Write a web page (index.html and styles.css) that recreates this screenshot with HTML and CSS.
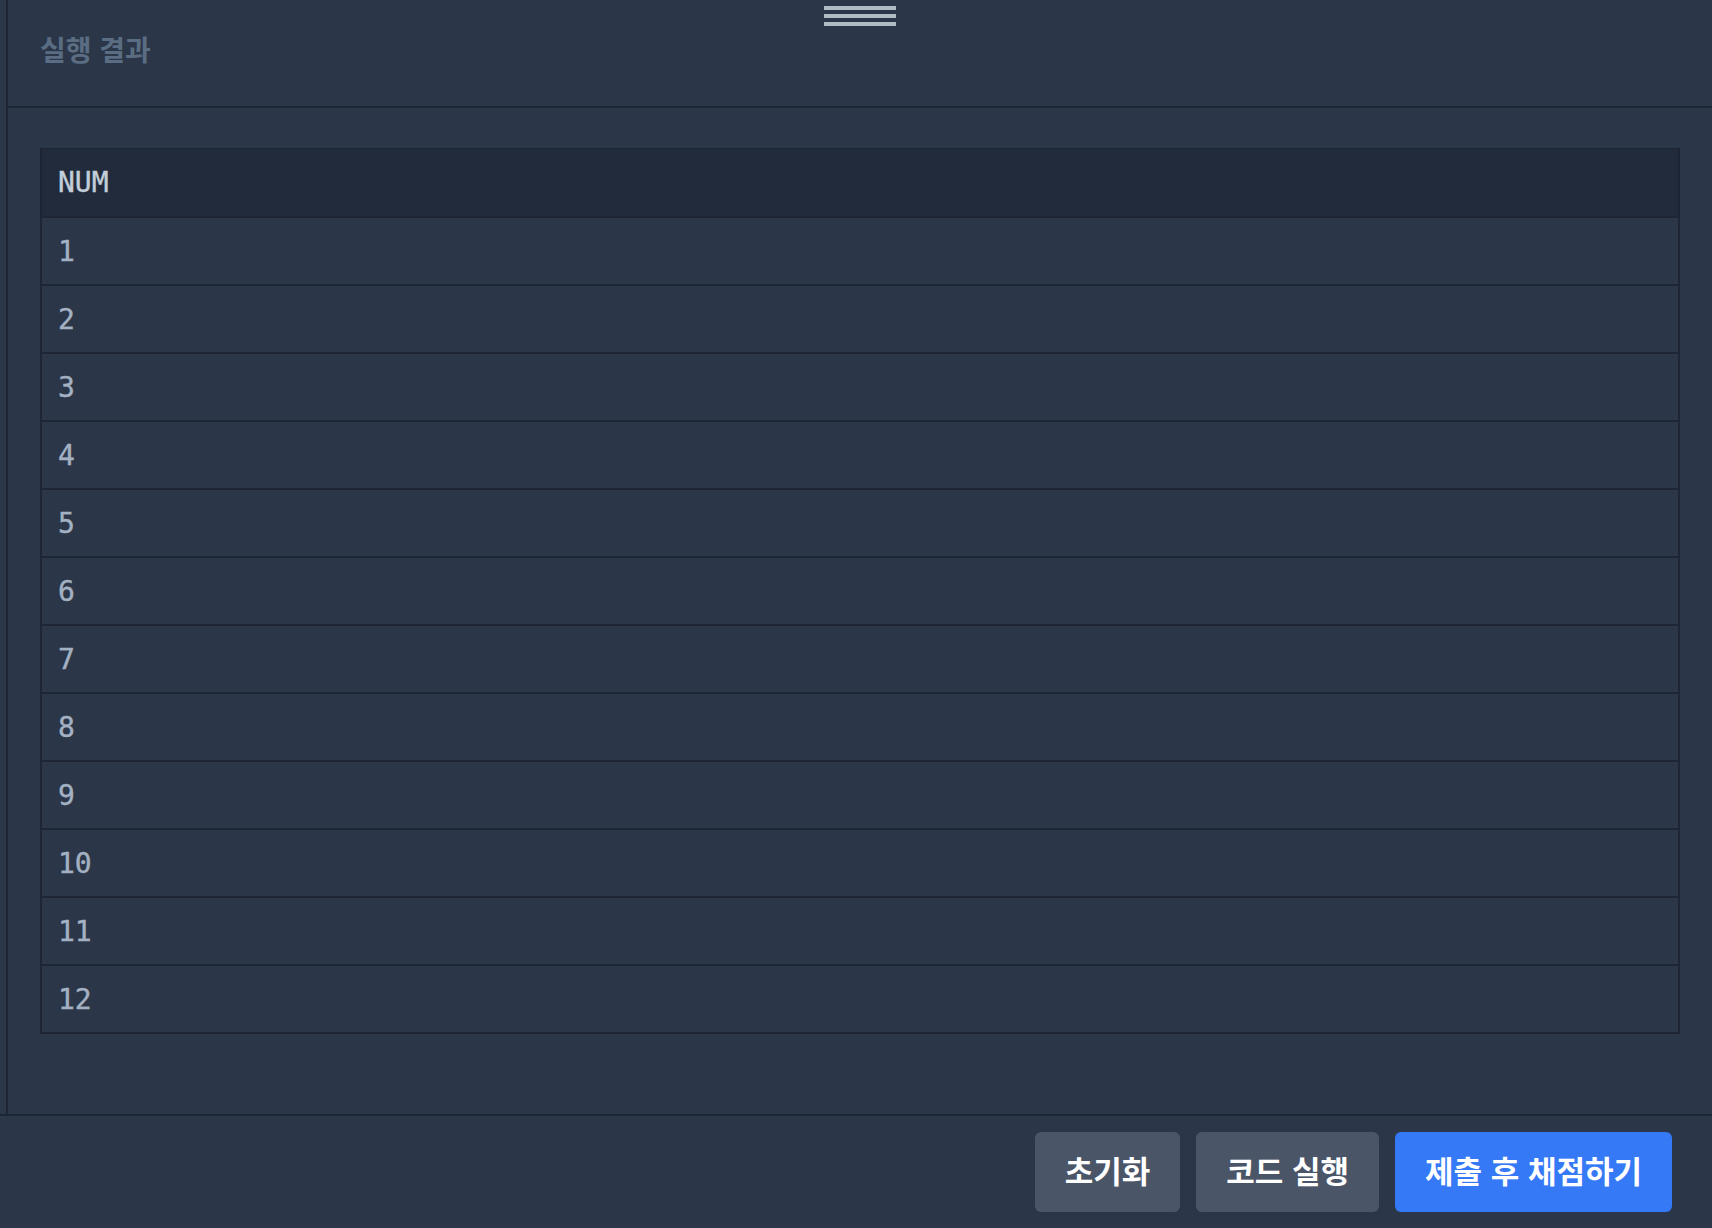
FILE: index.html
```html
<!DOCTYPE html>
<html lang="ko">
<head>
<meta charset="utf-8">
<title>실행 결과</title>
<link rel="stylesheet" href="styles.css">
</head>
<body>
<div class="app">
  <section class="panel">
    <div class="handle"><span></span><span></span><span></span></div>
    <header class="panel-head">
      <h2 class="panel-title">실행 결과</h2>
    </header>
    <div class="panel-body">
      <div class="result-table">
        <div class="row head">NUM</div>
        <div class="row">1</div>
        <div class="row">2</div>
        <div class="row">3</div>
        <div class="row">4</div>
        <div class="row">5</div>
        <div class="row">6</div>
        <div class="row">7</div>
        <div class="row">8</div>
        <div class="row">9</div>
        <div class="row">10</div>
        <div class="row">11</div>
        <div class="row">12</div>
      </div>
    </div>
  </section>
  <footer class="actions">
    <button class="btn btn-gray">초기화</button>
    <button class="btn btn-gray">코드 실행</button>
    <button class="btn btn-blue">제출 후 채점하기</button>
  </footer>
</div>
</body>
</html>
```
FILE: styles.css
```css
* { box-sizing: border-box; }
html, body {
  margin: 0;
  padding: 0;
  background: #2b3648;
  width: 1712px;
  height: 1228px;
  overflow: hidden;
  font-family: "Noto Sans CJK KR", "Noto Sans", sans-serif;
}
.app {
  display: flex;
  flex-direction: column;
  height: 1228px;
}
.panel {
  position: relative;
  flex: 1;
  margin-left: 6px;
  border-left: 2px solid #1d2535;
  display: flex;
  flex-direction: column;
}
.handle {
  position: absolute;
  top: 6px;
  left: 50%;
  transform: translateX(-50%);
  width: 72px;
  display: flex;
  flex-direction: column;
  gap: 4px;
}
.handle span {
  display: block;
  height: 4px;
  background: #b0bcc4;
}
.panel-head {
  height: 108px;
  padding: 30px 32px 0;
  border-bottom: 2px solid #1d2535;
}
.panel-title {
  margin: 0;
  font-size: 28px;
  line-height: 38px;
  font-weight: 700;
  color: #5a6d83;
}
.panel-body {
  padding: 40px 32px 0;
}
.result-table {
  border: 2px solid #1d2535;
  border-top-width: 1px;
}
.row {
  height: 68px;
  display: flex;
  align-items: center;
  padding-left: 16px;
  border-bottom: 2px solid #1d2535;
  font-family: "DejaVu Sans Mono", monospace;
  font-size: 28px;
  color: #a3b1c2;
  background: #2b3648;
  -webkit-text-stroke: 0.4px #a3b1c2;
}
.row:last-child { border-bottom: none; height: 66px; }
.row.head {
  background: #222b3c;
  color: #c3ced9;
  -webkit-text-stroke: 0.4px #c3ced9;
  height: 69px;
}
.actions {
  height: 114px;
  border-top: 2px solid #1d2535;
  display: flex;
  justify-content: flex-end;
  align-items: flex-start;
  gap: 16px;
  padding: 16px 40px 0 0;
}
.btn {
  height: 80px;
  border: none;
  border-radius: 6px;
  padding: 0 30px 5px;
  font-family: "Noto Sans CJK KR", "Noto Sans", sans-serif;
  font-size: 31px;
  font-weight: 700;
  color: #ffffff;
  cursor: pointer;
}
.btn-gray { background: #4a5568; }
.btn-blue { background: #3579f6; }
```
